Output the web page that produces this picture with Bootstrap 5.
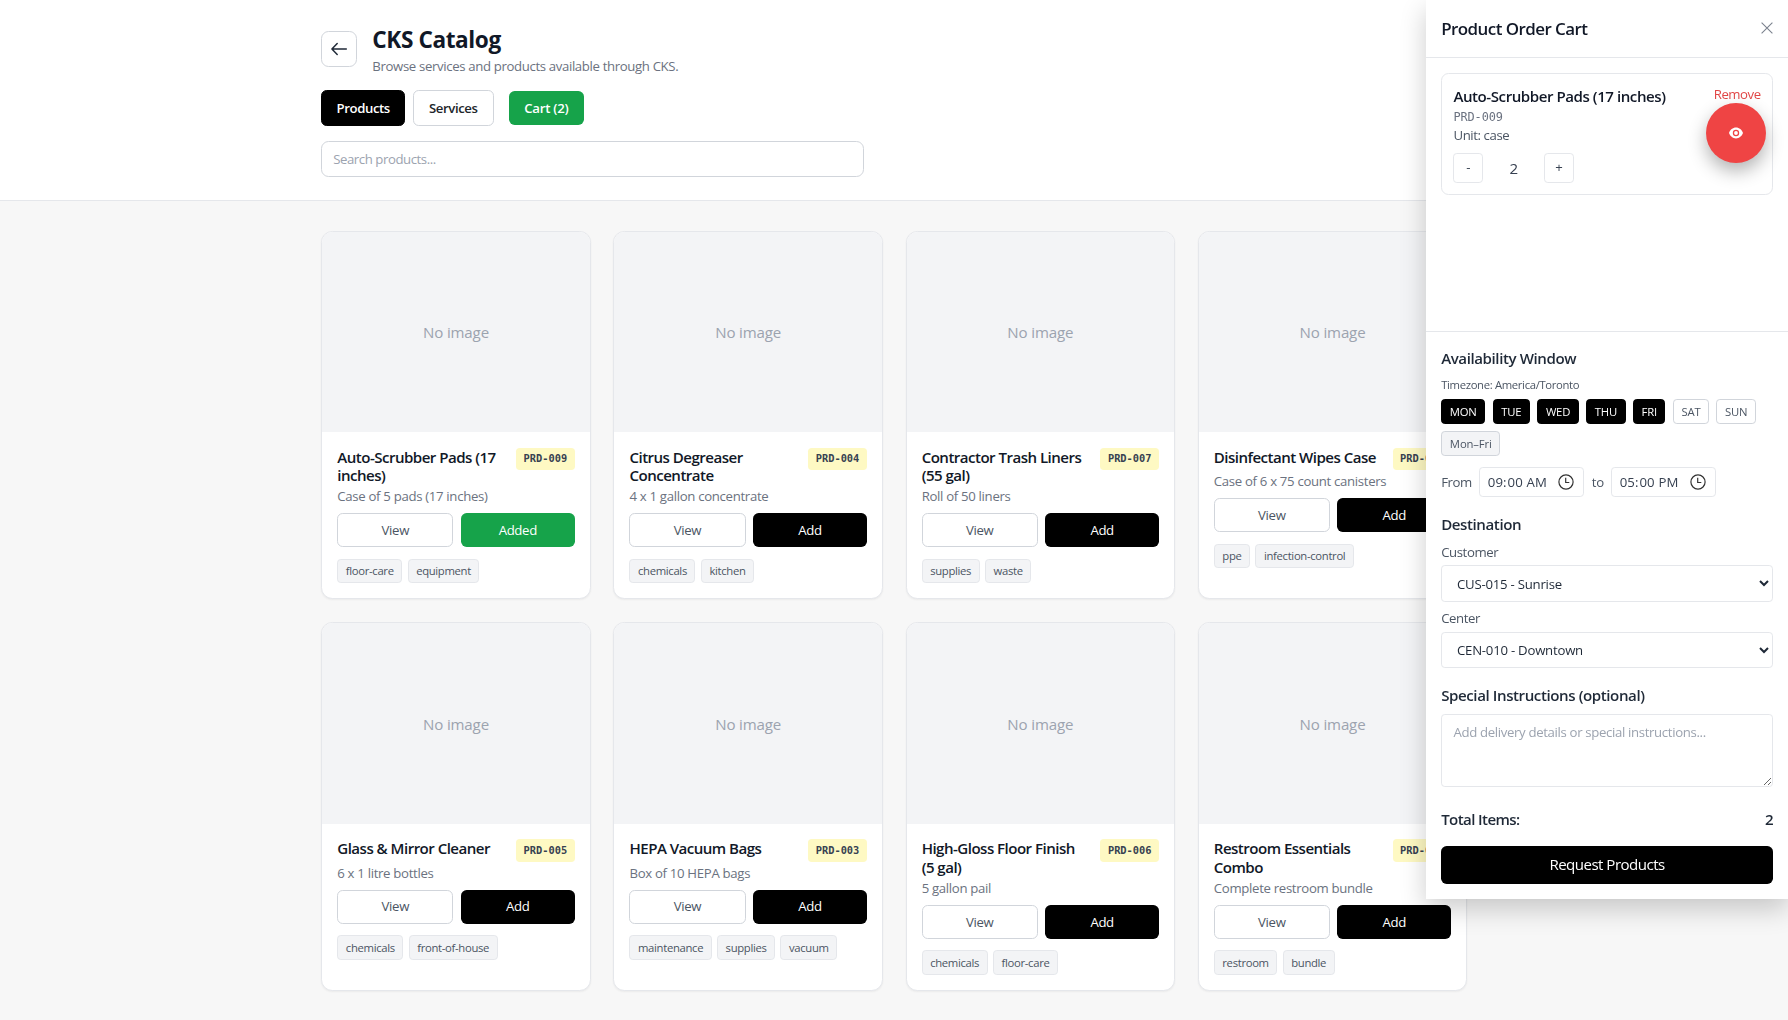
<!DOCTYPE html>
<html lang="en">
<head>
<meta charset="utf-8">
<meta name="viewport" content="width=device-width, initial-scale=1">
<title>CKS Catalog</title>
<link href="https://cdn.jsdelivr.net/npm/bootstrap@5.3.0/dist/css/bootstrap.min.css" rel="stylesheet">
<style>
  html { font-size: 15.08px; }
  body { font-family: "Open Sans", "Noto Sans", sans-serif; letter-spacing: -.0275em; line-height: 1.5; color: #111827; background: #f7f7f7; height: 1020px; overflow: hidden; }
  .wrap { width: 76rem; margin: 0 auto 0 calc(50% - 38rem + .25px); }
  .fs-s { font-size: .875rem; line-height: 1.25rem; }
  .fs-xs { font-size: .75rem; line-height: 1rem; }
  .c5 { color: #6b7280; } .c6 { color: #4b5563; } .c7 { color: #374151; }
  .mono { font-family: "DejaVu Sans Mono", "Liberation Mono", monospace; letter-spacing: 0; }
  .topbar { border-bottom: 1px solid #e5e7eb; padding: 1.5rem 0; }
  .back { width: 36px; height: 36px; border: 1px solid #d1d5db; border-radius: .5rem; background: #fff; }
  h1 { font-size: 1.5rem; line-height: 2rem; font-weight: 700; letter-spacing: -.018em; padding-top: 2.5px; margin-bottom: 1.3px; }
  .intro { letter-spacing: -.027em; }
  .tab { font-size: .875rem; line-height: 1.25rem; font-weight: 600; padding: .5rem 0; width: 84px; border-radius: .375rem; border: 1px solid #d1d5db; letter-spacing: inherit; }
  .tab-mid { width: 81px; }
  .tab-on, .tab-on:hover { background: #000; color: #fff; border-color: #000; }
  .tab-cart, .tab-cart:hover { background: #16a34a; color: #fff; border: 0; letter-spacing: -.018em; width: 75px; }
  .search { width: 36rem; height: 36px; font-size: .875rem; padding: 0 11px; border: 1px solid #d1d5db; border-radius: .5rem; letter-spacing: -.033em; }
  .form-control::placeholder { color: #9ca3af; }
  .catalog { display: grid; grid-template-columns: repeat(4, 1fr); gap: 1.54rem 1.5rem; padding: 1.97rem 0; }
  .product { background: #fff; border: 1px solid #e5e7eb; border-radius: .75rem; overflow: hidden; box-shadow: 0 1px 2px rgba(0,0,0,.05); }
  .thumb { aspect-ratio: 4 / 3; background: #f3f4f6; color: #9ca3af; letter-spacing: -.01em; }
  .name { font-size: 1rem; line-height: 1.25rem; font-weight: 600; letter-spacing: -.035em; }
  .sku { font-size: 10.35px; line-height: 1rem; font-weight: 700; padding: .25rem .5rem; border-radius: .25rem; background: #fef9c3; color: #374151; white-space: nowrap; }
  .desc { margin-top: 1.7px; letter-spacing: -.024em; }
  .act { flex: 1 1 0; height: 34px; padding: 0; border-radius: .375rem; font-size: .875rem; line-height: 1.25rem; letter-spacing: -.025em; }
  .act-view { border: 1px solid #d1d5db; color: #4b5563; background: #fff; flex-grow: 1.02; }
  .act-add, .act-add:hover { background: #000; color: #fff; font-weight: 500; }
  .act-done, .act-done:hover { background: #16a34a; color: #fff; font-weight: 500; }
  .chips { gap: 5.4px; margin-top: 11.3px; }
  .chip { font-size: .75rem; line-height: 1rem; padding: .25rem .5rem; border: 1px solid #e5e7eb; border-radius: .25rem; background: #f3f4f6; color: #4b5563; letter-spacing: -.029em; }
  .cart { position: fixed; top: 0; right: 0; width: 24rem; height: 899px; background: #fff; box-shadow: 0 10px 25px rgba(0,0,0,.2); z-index: 10; }
  .cart-head { padding: 1rem; border-bottom: 1px solid #e5e7eb; height: 57.5px; }
  .cart-head h2 { font-size: 1.125rem; line-height: 1.75rem; font-weight: 600; letter-spacing: -.033em; padding-top: 1.5px; }
  .cart-item { border: 1px solid #e5e7eb; border-radius: .5rem; padding: 11.3px; height: 122px; }
  .cart-name { font-weight: 600; line-height: 1.5rem; letter-spacing: -.03em; }
  .cart-sku { font-size: 11.9px; line-height: 17px; letter-spacing: -.01em; padding-top: 1px; }
  .remove { color: #dc2626; letter-spacing: -.035em; opacity: .85; }
  .qty-row { margin-top: 9px; }
  .qty { width: 30px; height: 30px; padding: 0; border: 1px solid #e5e7eb; border-radius: .25rem; font-size: .875rem; color: #374151; }
  .count { width: 60.5px; font-size: 1rem; }
  .cart-form { border-top: 1px solid #e5e7eb; padding: 1rem; height: 568px; }
  .cart-form h3, .total { font-size: 1rem; line-height: 1.5rem; font-weight: 600; color: #1f2937; }
  .tz { margin-top: 7.5px; letter-spacing: -.03em; }
  .days { gap: 7.5px 7.4px; margin-top: 7px; }
  .day { font-size: .75rem; line-height: 1rem; padding: 3.8px 7.6px; border: 1px solid #d1d5db; border-radius: .25rem; letter-spacing: -.018em; color: #4b5563; background: #fff; }
  .day.on { background: #000; border-color: #000; color: #fff; }
  .day.preset { background: #f3f4f6; padding: 3.8px 7.7px; letter-spacing: -.012em; }
  .hours { margin-top: 11px; gap: 7.5px; }
  .field { border: 1px solid #e5e7eb; border-radius: .25rem; background: #fff; color: #1f2937; font-size: .875rem; letter-spacing: -.018em; }
  .time { width: 105px; height: 30px; padding: 0 7.5px; letter-spacing: .005em; color: #374151; }
  .time::-webkit-calendar-picker-indicator { width: 16px; height: 16px; padding: 0; margin-right: 2px; background: url("data:image/svg+xml,%3Csvg xmlns='http://www.w3.org/2000/svg' viewBox='0 0 16 16' fill='none' stroke='%23333' stroke-width='1.2'%3E%3Ccircle cx='8' cy='8' r='7.100'/%3E%3Cpath d='M7.700 3.800v4.700h3.600'/%3E%3C/svg%3E") center / 16px no-repeat; }
  .dest { margin: 15.5px 0 0; }
  .lab { margin-top: 7.5px; margin-bottom: 3.7px; }
  .pick { width: 100%; height: 36.5px; padding: 0 0 0 10.8px; display: block; }
  .special { margin: 15.5px 0 7.5px; }
  .notes { height: 73.5px; padding: 7.8px 11.3px; border-radius: .25rem; line-height: 1.25rem; border-color: #e5e7eb; font-size: .875rem; letter-spacing: -.026em; resize: both; }
  .total { margin-top: 20.5px; margin-bottom: 15px; letter-spacing: -.04em; }
  .send, .send:hover { background: #000; color: #fff; font-weight: 500; height: 38px; padding: 0; border-radius: .375rem; letter-spacing: -.035em; }
  .eye { position: fixed; left: 1706px; top: 103px; width: 60px; height: 60px; border-radius: 50%; background: #ef4444; box-shadow: 0 8px 18px rgba(0,0,0,.3); z-index: 20; }
</style>
<script src="https://cdn.jsdelivr.net/npm/bootstrap@5.3.0/dist/js/bootstrap.bundle.min.js"></script>
</head>
<body>
<header class="topbar bg-white">
  <div class="wrap">
    <div class="d-flex align-items-center gap-3">
      <button class="back d-flex align-items-center justify-content-center p-0" aria-label="Back">
        <svg width="18" height="18" viewBox="0 0 18 18" fill="none" stroke="#1f2937" stroke-width="1.5" stroke-linecap="round" stroke-linejoin="round"><path d="M16.300 9H2M7.200 3.500L1.900 9l5.300 5.500"/></svg>
      </button>
      <div>
        <h1>CKS Catalog</h1>
        <div class="intro fs-s c5">Browse services and products available through CKS.</div>
      </div>
    </div>
    <div class="d-flex align-items-center mt-3">
      <button class="btn tab tab-on me-2">Products</button>
      <button class="btn tab tab-mid bg-white">Services</button>
      <button class="btn tab tab-cart ms-3">Cart (2)</button>
    </div>
    <input class="form-control search mt-3" placeholder="Search products...">
  </div>
</header>

<main class="wrap catalog">
  <article class="product">
    <div class="thumb d-flex align-items-center justify-content-center">No image</div>
    <div class="p-3">
      <div class="d-flex justify-content-between align-items-start gap-2"><div class="name">Auto-Scrubber Pads (17 inches)</div><span class="sku mono">PRD-009</span></div>
      <div class="desc fs-s c5">Case of 5 pads (17 inches)</div>
      <div class="d-flex gap-2 mt-2"><button class="btn act act-view">View</button><button class="btn act act-done">Added</button></div>
      <div class="d-flex chips"><span class="chip">floor-care</span><span class="chip">equipment</span></div>
    </div>
  </article>
  <article class="product">
    <div class="thumb d-flex align-items-center justify-content-center">No image</div>
    <div class="p-3">
      <div class="d-flex justify-content-between align-items-start gap-2"><div class="name">Citrus Degreaser Concentrate</div><span class="sku mono">PRD-004</span></div>
      <div class="desc fs-s c5">4 x 1 gallon concentrate</div>
      <div class="d-flex gap-2 mt-2"><button class="btn act act-view">View</button><button class="btn act act-add">Add</button></div>
      <div class="d-flex chips"><span class="chip">chemicals</span><span class="chip">kitchen</span></div>
    </div>
  </article>
  <article class="product">
    <div class="thumb d-flex align-items-center justify-content-center">No image</div>
    <div class="p-3">
      <div class="d-flex justify-content-between align-items-start gap-2"><div class="name">Contractor Trash Liners (55&nbsp;gal)</div><span class="sku mono">PRD-007</span></div>
      <div class="desc fs-s c5">Roll of 50 liners</div>
      <div class="d-flex gap-2 mt-2"><button class="btn act act-view">View</button><button class="btn act act-add">Add</button></div>
      <div class="d-flex chips"><span class="chip">supplies</span><span class="chip">waste</span></div>
    </div>
  </article>
  <article class="product">
    <div class="thumb d-flex align-items-center justify-content-center">No image</div>
    <div class="p-3">
      <div class="d-flex justify-content-between align-items-start gap-2"><div class="name">Disinfectant Wipes Case</div><span class="sku mono">PRD-008</span></div>
      <div class="desc fs-s c5">Case of 6 x 75 count canisters</div>
      <div class="d-flex gap-2 mt-2"><button class="btn act act-view">View</button><button class="btn act act-add">Add</button></div>
      <div class="d-flex chips"><span class="chip">ppe</span><span class="chip">infection-control</span></div>
    </div>
  </article>
  <article class="product">
    <div class="thumb d-flex align-items-center justify-content-center">No image</div>
    <div class="p-3">
      <div class="d-flex justify-content-between align-items-start gap-2"><div class="name">Glass &amp; Mirror Cleaner</div><span class="sku mono">PRD-005</span></div>
      <div class="desc fs-s c5">6 x 1 litre bottles</div>
      <div class="d-flex gap-2 mt-2"><button class="btn act act-view">View</button><button class="btn act act-add">Add</button></div>
      <div class="d-flex chips"><span class="chip">chemicals</span><span class="chip">front-of-house</span></div>
    </div>
  </article>
  <article class="product">
    <div class="thumb d-flex align-items-center justify-content-center">No image</div>
    <div class="p-3">
      <div class="d-flex justify-content-between align-items-start gap-2"><div class="name">HEPA Vacuum Bags</div><span class="sku mono">PRD-003</span></div>
      <div class="desc fs-s c5">Box of 10 HEPA bags</div>
      <div class="d-flex gap-2 mt-2"><button class="btn act act-view">View</button><button class="btn act act-add">Add</button></div>
      <div class="d-flex chips"><span class="chip">maintenance</span><span class="chip">supplies</span><span class="chip">vacuum</span></div>
    </div>
  </article>
  <article class="product">
    <div class="thumb d-flex align-items-center justify-content-center">No image</div>
    <div class="p-3">
      <div class="d-flex justify-content-between align-items-start gap-2"><div class="name">High-Gloss Floor Finish (5&nbsp;gal)</div><span class="sku mono">PRD-006</span></div>
      <div class="desc fs-s c5">5 gallon pail</div>
      <div class="d-flex gap-2 mt-2"><button class="btn act act-view">View</button><button class="btn act act-add">Add</button></div>
      <div class="d-flex chips"><span class="chip">chemicals</span><span class="chip">floor-care</span></div>
    </div>
  </article>
  <article class="product">
    <div class="thumb d-flex align-items-center justify-content-center">No image</div>
    <div class="p-3">
      <div class="d-flex justify-content-between align-items-start gap-2"><div class="name">Restroom Essentials Combo</div><span class="sku mono">PRD-001</span></div>
      <div class="desc fs-s c5">Complete restroom bundle</div>
      <div class="d-flex gap-2 mt-2"><button class="btn act act-view">View</button><button class="btn act act-add">Add</button></div>
      <div class="d-flex chips"><span class="chip">restroom</span><span class="chip">bundle</span></div>
    </div>
  </article>
</main>

<aside class="cart d-flex flex-column">
  <div class="cart-head d-flex justify-content-between align-items-center">
    <h2 class="m-0">Product Order Cart</h2>
    <svg width="12" height="12" viewBox="0 0 12 12" stroke="#7b828e" stroke-width="1.1" fill="none"><path d="M.6 .6l10.800 10.800M11.400 .6L.6 11.400"/></svg>
  </div>
  <div class="p-3 flex-grow-1">
    <div class="cart-item">
      <div class="d-flex justify-content-between align-items-start">
        <div>
          <div class="cart-name">Auto-Scrubber Pads (17 inches)</div>
          <div class="mono c5 cart-sku">PRD-009</div>
          <div class="fs-s c6">Unit: case</div>
        </div>
        <div class="fs-s remove">Remove</div>
      </div>
      <div class="d-flex align-items-center qty-row">
        <button class="btn qty">-</button>
        <span class="count text-center c7">2</span>
        <button class="btn qty">+</button>
      </div>
    </div>
  </div>
  <div class="cart-form">
    <h3 class="m-0">Availability Window</h3>
    <div class="fs-xs c6 tz">Timezone: America/Toronto</div>
    <div class="d-flex flex-wrap days">
      <button class="day on">MON</button><button class="day on">TUE</button><button class="day on">WED</button><button class="day on">THU</button><button class="day on">FRI</button><button class="day">SAT</button><button class="day">SUN</button><button class="day preset">Mon–Fri</button>
    </div>
    <div class="d-flex align-items-center fs-s c6 hours">
      <span>From</span><input class="field time" type="time" value="09:00"><span>to</span><input class="field time" type="time" value="17:00">
    </div>
    <h3 class="dest">Destination</h3>
    <div class="fs-s c6 lab">Customer</div>
    <select class="field pick"><option>CUS-015 - Sunrise</option></select>
    <div class="fs-s c6 lab">Center</div>
    <select class="field pick"><option>CEN-010 - Downtown</option></select>
    <h3 class="special">Special Instructions (optional)</h3>
    <textarea class="form-control notes" placeholder="Add delivery details or special instructions..."></textarea>
    <div class="total d-flex justify-content-between"><span>Total Items:</span><span>2</span></div>
    <button class="btn send w-100">Request Products</button>
  </div>
</aside>
<button class="eye border-0 p-0 d-flex align-items-center justify-content-center" aria-label="Preview">
  <svg width="14" height="12" viewBox="0 0 14 12"><path fill="#fff" fill-rule="evenodd" d="M7 .6C3.800 .6 1.100 2.900 0 6c1.100 3.100 3.800 5.400 7 5.400S12.900 9.100 14 6C12.900 2.900 10.200 .6 7 .6ZM7 9.200a3.200 3.200 0 1 1 0-6.400 3.200 3.200 0 0 1 0 6.400ZM7 7.900a1.900 1.900 0 1 0 0-3.800 1.900 1.900 0 0 0 0 3.800Z"/></svg>
</button>
</body>
</html>
